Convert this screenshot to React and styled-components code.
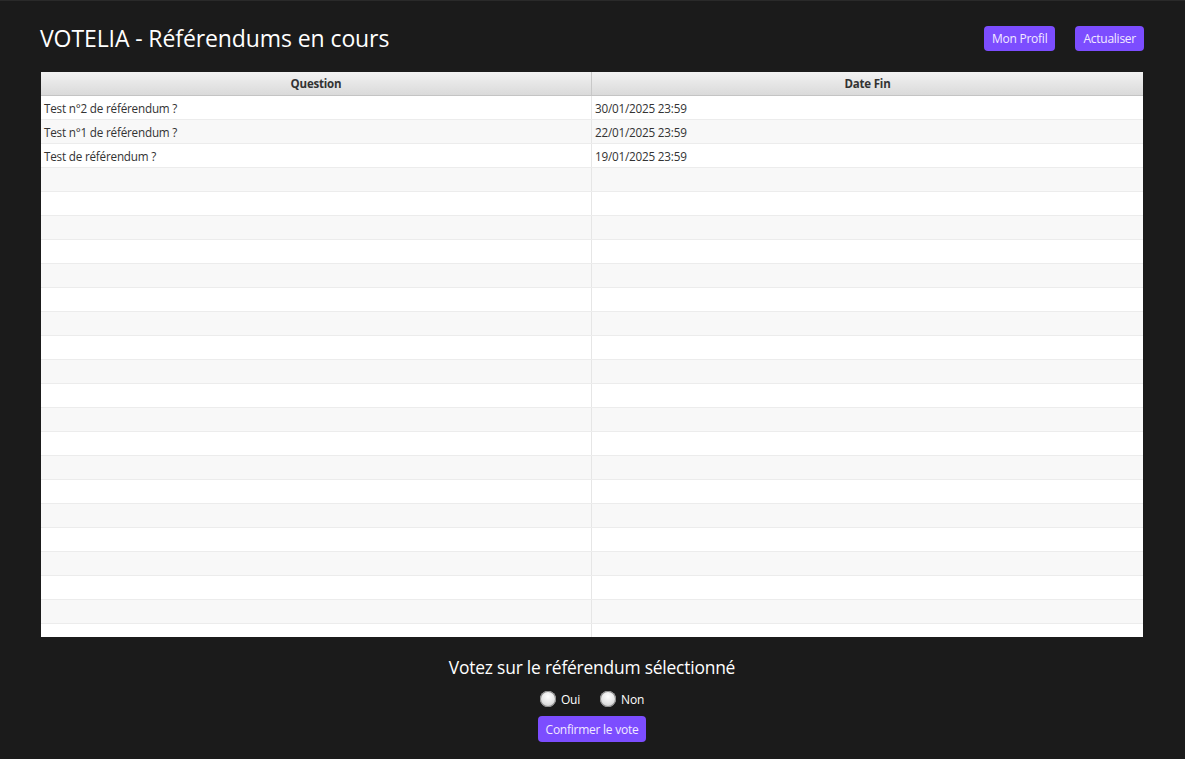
import React from "react";
import styled, { createGlobalStyle } from "styled-components";

const Global = createGlobalStyle`
  html, body { margin: 0; padding: 0; background: #1b1b1b; }
  body { font-family: "Open Sans", "Noto Sans", sans-serif; }
  * { box-sizing: border-box; }
`;

const Page = styled.div`
  width: 1185px;
  height: 759px;
  background: #1b1b1b;
  display: flex;
  flex-direction: column;
  padding: 19px 41px 0 40px;
  border-top: 1px solid #2a2a2a;
`;

const TopBar = styled.div`
  height: 37px;
  display: flex;
  align-items: center;
  justify-content: space-between;
`;

const Title = styled.h1`
  margin: 0 0 2px 0;
  font-weight: 400;
  font-size: 23px;
  letter-spacing: -0.1px;
  color: #ffffff;
`;

const Actions = styled.div`
  display: flex;
  gap: 20px;
`;

const Button = styled.button`
  height: ${(p) => p.$h || 25}px;
  padding: 0 8px;
  border: none;
  border-radius: 4px;
  background: #7c4dff;
  color: #f2eaff;
  font-family: "Open Sans", "Noto Sans", sans-serif;
  font-size: 12px;
  letter-spacing: -0.25px;
  cursor: pointer;
`;

const Table = styled.div`
  margin: 15px 1px 0 1px;
  height: 565px;
  background: #ffffff;
  overflow: hidden;
  display: flex;
  flex-direction: column;
`;

const HeaderRow = styled.div`
  display: grid;
  grid-template-columns: 551px 1fr;
  height: 24px;
  flex: none;
  background: linear-gradient(#f2f2f2, #dadada);
  border-bottom: 1px solid #c4c4c4;
`;

const HeaderCell = styled.div`
  display: flex;
  align-items: center;
  justify-content: center;
  font-size: 11.5px;
  font-weight: 700;
  letter-spacing: -0.2px;
  color: #333333;
  border-right: ${(p) => (p.$last ? "none" : "1px solid #c8c8c8")};
`;

const Row = styled.div`
  display: grid;
  grid-template-columns: 551px 1fr;
  height: 24px;
  flex: none;
  background: ${(p) => (p.$odd ? "#f8f8f8" : "#ffffff")};
  border-bottom: 1px solid #ececec;
`;

const Cell = styled.div`
  display: flex;
  align-items: center;
  padding-left: 3px;
  font-size: 11.7px;
  letter-spacing: -0.2px;
  color: #333333;
  border-right: ${(p) => (p.$last ? "none" : "1px solid #e6e6e6")};
  white-space: nowrap;
`;

const VoteSection = styled.div`
  display: flex;
  flex-direction: column;
  align-items: center;
  padding-top: 19px;
`;

const VoteTitle = styled.div`
  font-size: 17.4px;
  letter-spacing: -0.2px;
  color: #ffffff;
  height: 22px;
  line-height: 22px;
`;

const Choices = styled.div`
  display: flex;
  gap: 20px;
  margin-top: 12px;
  height: 18px;
  align-items: center;
`;

const Choice = styled.label`
  display: flex;
  align-items: center;
  gap: 5px;
  font-size: 12px;
  color: #ffffff;
  letter-spacing: -0.2px;
`;

const RadioDot = styled.span`
  width: 16px;
  height: 16px;
  border-radius: 50%;
  background: radial-gradient(circle at 50% 35%, #ffffff 0%, #e8e8e8 45%, #bdbdbd 100%);
  box-shadow: 0 0 0 1px #8a8a8a inset;
`;

const ConfirmWrap = styled.div`
  margin-top: 8px;
`;

const rows = [
  ["Test n°2 de référendum ?", "30/01/2025 23:59"],
  ["Test n°1 de référendum ?", "22/01/2025 23:59"],
  ["Test de référendum ?", "19/01/2025 23:59"],
];

export default function App() {
  const all = [...rows];
  while (all.length < 24) all.push(["", ""]);
  return (
    <>
      <Global />
      <Page>
        <TopBar>
          <Title>VOTELIA - Référendums en cours</Title>
          <Actions>
            <Button>Mon Profil</Button>
            <Button>Actualiser</Button>
          </Actions>
        </TopBar>
        <Table>
          <HeaderRow>
            <HeaderCell>Question</HeaderCell>
            <HeaderCell $last>Date Fin</HeaderCell>
          </HeaderRow>
          {all.map((r, i) => (
            <Row key={i} $odd={i % 2 === 1}>
              <Cell>{r[0]}</Cell>
              <Cell $last>{r[1]}</Cell>
            </Row>
          ))}
        </Table>
        <VoteSection>
          <VoteTitle>Votez sur le référendum sélectionné</VoteTitle>
          <Choices>
            <Choice>
              <RadioDot />
              Oui
            </Choice>
            <Choice>
              <RadioDot />
              Non
            </Choice>
          </Choices>
          <ConfirmWrap>
            <Button $h={26}>Confirmer le vote</Button>
          </ConfirmWrap>
        </VoteSection>
      </Page>
    </>
  );
}
